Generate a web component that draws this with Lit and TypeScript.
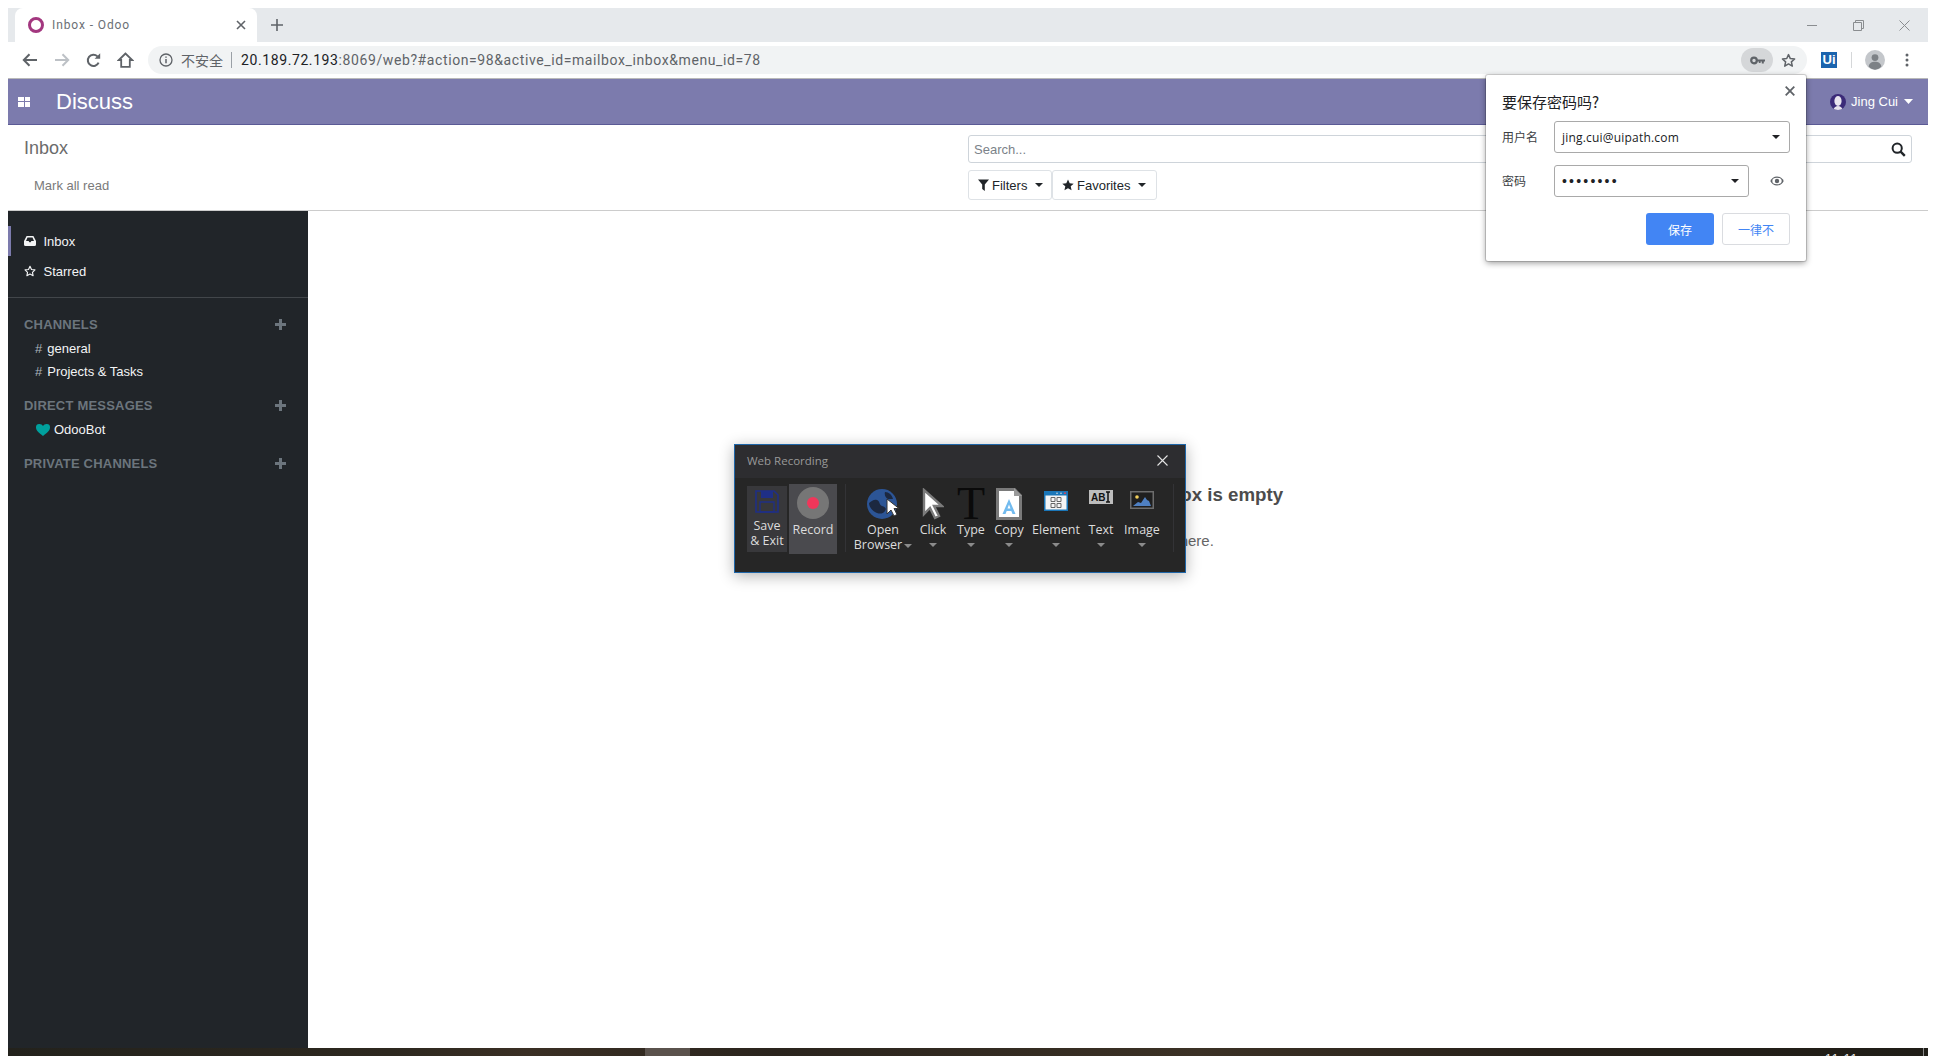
import { LitElement, html, css } from "lit";
import { customElement } from "lit/decorators.js";

const CJK = css`"Noto Sans CJK SC"`;

const caret = html`<svg class="tcaret" width="8" height="4" viewBox="0 0 8 4"><path d="M0 0h8L4 4z" fill="#8b8b8b"/></svg>`;

@customElement("app-root")
export class AppRoot extends LitElement {
  static styles = css`
    :host { display: block; width: 1936px; height: 1056px; overflow: hidden; background: #fff; position: relative; font-family: "Liberation Sans", ${CJK}, sans-serif; }
    * { box-sizing: border-box; }
    svg { display: block; flex: none; }
    .win { margin-left: 8px; width: 1920px; height: 1056px; padding-top: 8px; display: flex; flex-direction: column; }

    .tabstrip { height: 34px; background: #e6e9ec; display: flex; align-items: stretch; flex: none; padding-left: 7px; }
    .tab { width: 242px; background: #fff; border-radius: 8px 8px 0 0; display: flex; align-items: center; padding-left: 13px; padding-right: 11px; }
    .tab .fav { width: 16px; height: 16px; border: 3px solid #a3377f; border-radius: 50%; }
    .tab .ttl { font: 12px "Roboto", sans-serif; letter-spacing: .9px; color: #6b7075; margin-left: 8px; flex: 1; }
    .newtab { margin-left: 14px; align-self: center; }
    .strip-fill { flex: 1; }
    .winbtns { display: flex; align-items: center; gap: 35px; padding-right: 18px; }

    .toolbar { height: 36px; flex: none; display: flex; align-items: center; background: #fff; }
    .navs { display: flex; align-items: center; width: 140px; padding-left: 14px; }
    .navs .nb { width: 32px; display: flex; justify-content: flex-start; }
    .navs .nb.rl { padding-left: 1px; }
    .omni { width: 1659px; height: 28px; background: #f1f3f4; border-radius: 14px; display: flex; align-items: center; padding-left: 11px; padding-right: 11px; flex: none; }
    .sec { font: 14px ${CJK}, sans-serif; color: #5f6368; margin-left: 8px; width: 42px; white-space: nowrap; }
    .omni .bar { width: 1px; height: 16px; background: #9aa0a6; margin: 0 9px 0 8px; }
    .url { font: 14px "Roboto", sans-serif; letter-spacing: .6px; color: #5f6368; flex: 1; white-space: nowrap; }
    .url b { font-weight: 400; color: #202124; }
    .keychip { width: 32px; height: 24px; background: #d5d7d9; border-radius: 12px; display: flex; align-items: center; justify-content: center; margin-right: 8px; }
    .tright { display: flex; align-items: center; }
    .ui { width: 16px; height: 16px; background: #1b64ae; color: #fff; font: 700 13px/16px "Liberation Sans", sans-serif; text-align: center; margin-left: 14px; }
    .tsep { width: 1px; height: 16px; background: #d5d7d9; margin-left: 14px; }
    .avatar { width: 20px; height: 20px; border-radius: 50%; background: #c4c7cb; margin-left: 13px; overflow: hidden; }
    .dots { margin-left: 20px; }

    .nav { height: 47px; flex: none; background: #7c7bad; border-top: 1px solid #b9b9b9; border-bottom: 1px solid #5b5a95; display: flex; align-items: center; color: #fff; padding-left: 10px; }
    .grid { width: 12px; height: 10px; display: grid; grid-template-columns: 1fr 1fr; grid-template-rows: 1fr 1fr; gap: 1px; }
    .grid i { background: #fff; display: block; }
    .nav h1 { font: 400 22px/1 "Liberation Sans", sans-serif; margin: 0 0 0 26px; flex: 1; }
    .user { display: flex; align-items: center; font-size: 13px; padding-right: 15px; }
    .user .pic { width: 16px; height: 16px; border-radius: 50%; background: #3b2a78; margin-right: 5px; overflow: hidden; }
    .user .cr { margin-left: 6px; }

    .cp { height: 86px; flex: none; border-bottom: 1px solid #ccc; display: flex; background: #fff; }
    .cp-left { width: 960px; padding-left: 16px; }
    .cp-left .bc { font-size: 18px; color: #6b6b6b; margin-top: 13px; line-height: 21px; }
    .cp-left .mark { font-size: 13px; color: #7a7a7a; margin: 19px 0 0 10px; line-height: 16px; }
    .cp-right { flex: 1; padding-top: 10px; padding-right: 16px; }
    .search { height: 28px; border: 1px solid #ced4da; border-radius: 3px; display: flex; align-items: center; justify-content: space-between; padding: 1px 5px 0 5px; font-size: 13px; color: #7b8289; }
    .btns { display: flex; margin-top: 7px; }
    .fbtn { height: 30px; border: 1px solid #dee2e6; border-radius: 3px; display: flex; align-items: center; font-size: 13px; color: #212529; padding-left: 9px; }
    .fbtn.a { width: 84px; }
    .fbtn.b { width: 105px; }
    .fbtn span { margin-left: 3px; }
    .fbtn .cr { margin-left: 8px; }

    .body { flex: 1; display: flex; min-height: 0; }
    .side { width: 300px; flex: none; background: #212529; color: #fff; padding-top: 15px; font-size: 13px; }
    .row { height: 30px; display: flex; align-items: center; padding-left: 16px; }
    .row.on { box-shadow: inset 3px 0 0 #7c7bad; }
    .row .lbl { margin-left: 7.5px; color: #f3f4f5; }
    .div { height: 1px; background: #42464a; margin-top: 11px; }
    .sec-h { height: 20px; display: flex; align-items: center; justify-content: space-between; padding: 0 22px 0 16px; font-weight: 700; font-size: 13px; color: #6c757d; margin-top: 12px; letter-spacing: .2px; }
    .sec-h.first { margin-top: 16px; }
    .item { height: 23px; display: flex; align-items: center; padding-left: 28px; color: #f3f4f5; }
    .item .h { color: #adb5bd; margin-right: 5px; margin-left: -1px; }
    .item .heart { margin-right: 4px; }
    .items { margin-top: 3px; }
    .main { flex: 1; padding-top: 273px; text-align: center; background: #fff; }
    .main h4 { font-size: 18.7px; font-weight: 700; color: #4c4c4c; margin: 0; line-height: 22px; }
    .main p { font-size: 15px; color: #666; margin: 24px 0 0; line-height: 22px; }

    .task { height: 8px; flex: none; background: linear-gradient(90deg, #23221c 0%, #2d281f 20%, #3a2f24 27%, #2a241d 40%, #3b3125 62%, #262019 80%, #1f1d17 100%); display: flex; position: relative; overflow: hidden; }
    .task .lit { width: 45px; margin-left: 637px; background: #5a524c; }
    .task .clock { margin-left: 1135px; font: 12px/12px "Liberation Sans", sans-serif; color: #eee; letter-spacing: 1px; margin-top: 5px; }
    .task .edge { position: absolute; right: 4px; top: 0; width: 1px; height: 8px; background: #8a8a8a; }

    .bubble { position: absolute; left: 1486px; top: 75px; width: 320px; height: 186px; background: #fff; border-radius: 2px; box-shadow: 0 0 0 1px rgba(0,0,0,.15), 0 2px 6px rgba(0,0,0,.4); padding: 0 16px; color: #3c4043; }
    .bubble .close { position: absolute; right: 11px; top: 11px; }
    .bubble .t { font: 15px/20px ${CJK}, sans-serif; color: #202124; padding-top: 17px; height: 46px; }
    .brow { display: flex; align-items: center; height: 32px; margin-bottom: 12px; font: 12px ${CJK}, sans-serif; }
    .brow label { width: 52px; flex: none; padding-bottom: 2px; }
    .sel { height: 32px; border: 1px solid #a9a9a9; border-radius: 3px; display: flex; align-items: center; justify-content: space-between; padding: 0 9px 0 7px; font: 12px "Open Sans", sans-serif; letter-spacing: .2px; color: #202124; }
    .sel.u { width: 236px; }
    .sel.p { width: 195px; font: 14px "Liberation Sans", sans-serif; letter-spacing: 2.2px; }
    .eye { margin-left: 21px; }
    .bact { display: flex; justify-content: flex-end; gap: 8px; margin-top: 16px; }
    .bb { width: 68px; height: 32px; border-radius: 3px; display: flex; align-items: center; justify-content: center; font: 12px ${CJK}, sans-serif; }
    .bb.s { background: #4285f4; color: #fff; }
    .bb.n { border: 1px solid #dadce0; color: #4285f4; }

    .rec { position: absolute; left: 734px; top: 444px; width: 452px; height: 129px; background: #262626; border: 1px solid #1f66a8; box-shadow: 0 3px 14px rgba(0,0,0,.3); font-family: "Open Sans", sans-serif; color: #d8d8d8; }
    .rec .hd { height: 33px; background: #2d2d30; display: flex; align-items: center; justify-content: space-between; padding: 0 17px 2px 12px; font-size: 11.5px; color: #999; }
    .tools { display: flex; height: 95px; padding-left: 12px; }
    .save { width: 40px; height: 66px; background: #38383b; margin-top: 8px; display: flex; flex-direction: column; align-items: center; font-size: 12.5px; line-height: 15px; text-align: center; padding-top: 4px; color: #dcdcdc; flex: none; white-space: nowrap; }
    .save svg { margin-bottom: 5px; }
    .record { width: 48px; height: 70px; background: #4a4a4e; margin: 6px 0 0 2px; display: flex; flex-direction: column; align-items: center; padding-top: 3px; font-size: 12.5px; line-height: 15px; color: #dcdcdc; flex: none; }
    .circle { width: 32px; height: 32px; border-radius: 50%; background: #767676; display: flex; align-items: center; justify-content: center; margin-bottom: 3px; }
    .circle i { width: 12px; height: 12px; border-radius: 50%; background: #f0365a; display: block; }
    .vs { width: 1px; height: 68px; background: #333336; margin-top: 6px; flex: none; }
    .vs.v1 { margin-left: 8px; }
    .vs.v2 { margin-left: 10px; }
    .tool { display: flex; flex-direction: column; align-items: center; font-size: 12.5px; line-height: 15px; color: #dcdcdc; text-align: center; flex: none; margin-top: 8px; }
    .w-open { width: 60px; margin-left: 7px; }
    .w-click { width: 36px; margin-left: 2px; }
    .w-type { width: 36px; margin-left: 2px; }
    .w-copy { width: 36px; margin-left: 2px; }
    .w-el { width: 52px; margin-left: 3px; }
    .w-text { width: 34px; margin-left: 2px; }
    .w-img { width: 42px; margin-left: 3px; }
    .ico { height: 36px; display: flex; align-items: center; justify-content: center; }
    .up7 { margin-bottom: 7px; }
    .up9 { margin-bottom: 9px; }
    .up14 { margin-bottom: 14px; }
    .tool .tl { white-space: nowrap; }
    .tcaret { margin: 6px auto 0; }
    .bigt { font: 46px/36px "Liberation Serif", serif; color: #0a0a0a; height: 36px; }
    .brow2 { display: flex; align-items: center; gap: 2px; white-space: nowrap; }
    .brow2 .tcaret { margin: 2px 0 0; }
  `;

  render() {
    return html`
      <div class="win">
        <div class="tabstrip">
          <div class="tab">
            <div class="fav"></div>
            <div class="ttl">Inbox - Odoo</div>
            <svg width="10" height="10" viewBox="0 0 10 10"><path d="M1 1l8 8M9 1l-8 8" stroke="#5f6368" stroke-width="1.6"/></svg>
          </div>
          <svg class="newtab" width="12" height="12" viewBox="0 0 12 12"><path d="M6 0v12M0 6h12" stroke="#5f6368" stroke-width="1.6"/></svg>
          <div class="strip-fill"></div>
          <div class="winbtns">
            <svg width="11" height="11" viewBox="0 0 11 11"><path d="M0 5.5h10" stroke="#8a8d90"/></svg>
            <svg width="11" height="11" viewBox="0 0 11 11"><path d="M.5 2.5h8v8h-8zM2.5 2.5v-2h8v8h-2" fill="none" stroke="#8a8d90"/></svg>
            <svg width="11" height="11" viewBox="0 0 11 11"><path d="M.5.5l10 10M10.5.5l-10 10" stroke="#8a8d90"/></svg>
          </div>
        </div>
        <div class="toolbar">
          <div class="navs">
            <div class="nb"><svg width="16" height="14" viewBox="0 0 16 14"><path d="M15 7H2M7.500 1.200L1.800 7l5.700 5.800" fill="none" stroke="#5f6368" stroke-width="2"/></svg></div>
            <div class="nb"><svg width="16" height="14" viewBox="0 0 16 14"><path d="M1 7h13M8.500 1.200L14.200 7l-5.700 5.800" fill="none" stroke="#bdc1c6" stroke-width="2"/></svg></div>
            <div class="nb rl"><svg width="15" height="15" viewBox="0 0 15 15"><path d="M12.600 9.600A5.600 5.600 0 1 1 11.400 3.400" fill="none" stroke="#5f6368" stroke-width="2"/><path d="M8.600 5.800h5.600V.2z" fill="#5f6368"/></svg></div>
            <div class="nb"><svg width="17" height="16" viewBox="0 0 17 16"><path d="M8.500 1.500L1.800 8h2.400v6.800h8.600V8h2.400z" fill="none" stroke="#5f6368" stroke-width="1.800"/></svg></div>
          </div>
          <div class="omni">
            <svg width="14" height="14" viewBox="0 0 14 14"><circle cx="7" cy="7" r="6" fill="none" stroke="#5f6368" stroke-width="1.300"/><path d="M7 6v4.200M7 3.400v1.400" stroke="#5f6368" stroke-width="1.500"/></svg>
            <span class="sec">不安全</span>
            <span class="bar"></span>
            <span class="url"><b>20.189.72.193</b>:8069/web?#action=98&active_id=mailbox_inbox&menu_id=78</span>
            <div class="keychip"><svg width="15" height="9" viewBox="0 0 15 9"><circle cx="4" cy="4.500" r="2.800" fill="none" stroke="#5f6368" stroke-width="2.200"/><path d="M6.500 3.400H15v2.200h-1.200v2h-2v-2h-1.200v1.400H8.800V5.600H6.500z" fill="#5f6368"/></svg></div>
            <svg width="15" height="15" viewBox="0 0 24 24"><path d="M12 2.600l2.900 6.300 6.900.7-5.200 4.600 1.500 6.800-6.100-3.500-6 3.500 1.400-6.800-5.100-4.600 6.900-.7z" fill="none" stroke="#5f6368" stroke-width="2.400" stroke-linejoin="round"/></svg>
          </div>
          <div class="tright">
            <div class="ui">Ui</div>
            <div class="tsep"></div>
            <div class="avatar"><svg width="20" height="20" viewBox="0 0 20 20"><circle cx="10" cy="7.600" r="3.400" fill="#7d8186"/><path d="M3.600 16.500c.6-3.600 3.400-4.800 6.400-4.800s5.800 1.200 6.400 4.800c-1.600 2-4 3.200-6.400 3.200s-4.800-1.200-6.400-3.200z" fill="#7d8186"/></svg></div>
            <svg class="dots" width="4" height="14" viewBox="0 0 4 14"><circle cx="2" cy="2" r="1.500" fill="#5f6368"/><circle cx="2" cy="7" r="1.500" fill="#5f6368"/><circle cx="2" cy="12" r="1.500" fill="#5f6368"/></svg>
          </div>
        </div>
        <div class="nav">
          <div class="grid"><i></i><i></i><i></i><i></i></div>
          <h1>Discuss</h1>
          <div class="user">
            <div class="pic"><svg width="16" height="16" viewBox="0 0 16 16"><ellipse cx="8" cy="7" rx="3.600" ry="5" fill="#e8e4ee"/><path d="M3.500 16c.5-3 2.500-4 4.500-4s4 1 4.500 4z" fill="#e8e4ee"/></svg></div>
            Jing Cui
            <svg class="cr" width="9" height="5" viewBox="0 0 9 5"><path d="M0 0h9L4.500 5z" fill="#fff"/></svg>
          </div>
        </div>
        <div class="cp">
          <div class="cp-left">
            <div class="bc">Inbox</div>
            <div class="mark">Mark all read</div>
          </div>
          <div class="cp-right">
            <div class="search"><span>Search...</span>
              <svg width="15" height="15" viewBox="0 0 15 15"><circle cx="6.200" cy="6.200" r="4.600" fill="none" stroke="#212529" stroke-width="2"/><path d="M9.600 9.600l4.200 4.200" stroke="#212529" stroke-width="2.400"/></svg>
            </div>
            <div class="btns">
              <div class="fbtn a">
                <svg width="11" height="12" viewBox="0 0 11 12"><path d="M0 .5h11L6.800 5.600V12L4.200 10V5.600z" fill="#212529"/></svg>
                <span>Filters</span>
                <svg class="cr" width="8" height="4" viewBox="0 0 8 4"><path d="M0 0h8L4 4z" fill="#212529"/></svg>
              </div>
              <div class="fbtn b">
                <svg width="12" height="12" viewBox="0 0 24 24"><path d="M12 1l3.400 7.400 8 .9-6 5.400 1.700 8L12 18.700l-7.100 4 1.700-8-6-5.400 8-.9z" fill="#212529"/></svg>
                <span>Favorites</span>
                <svg class="cr" width="8" height="4" viewBox="0 0 8 4"><path d="M0 0h8L4 4z" fill="#212529"/></svg>
              </div>
            </div>
          </div>
        </div>
        <div class="body">
          <div class="side">
            <div class="row on">
              <svg width="12" height="10" viewBox="0 0 12 10"><path d="M2.600 0h6.800L12 5v3.500A1.500 1.500 0 0 1 10.500 10h-9A1.500 1.500 0 0 1 0 8.500V5zM3.500 1.600L2 5h2.600l.8 1.300h1.200L7.400 5H10L8.500 1.600z" fill="#f3f4f5" fill-rule="evenodd"/></svg>
              <span class="lbl">Inbox</span>
            </div>
            <div class="row">
              <svg width="12" height="12" viewBox="0 0 24 24"><path d="M12 2.600l3 6.300 6.900.9-5 4.800 1.300 6.800-6.200-3.300-6.200 3.300 1.300-6.800-5-4.800 6.900-.9z" fill="none" stroke="#f3f4f5" stroke-width="2.300" stroke-linejoin="round"/></svg>
              <span class="lbl">Starred</span>
            </div>
            <div class="div"></div>
            <div class="sec-h first"><span>CHANNELS</span>${this.plus()}</div>
            <div class="items">
              <div class="item"><span class="h">#</span>general</div>
              <div class="item"><span class="h">#</span>Projects &amp; Tasks</div>
            </div>
            <div class="sec-h"><span>DIRECT MESSAGES</span>${this.plus()}</div>
            <div class="items">
              <div class="item">
                <svg class="heart" width="14" height="12" viewBox="0 0 14 12"><path d="M7 12C3 8.700 0 6.500 0 3.500A3.400 3.400 0 0 1 3.500 0C5 0 6.300.8 7 2c.7-1.200 2-2 3.500-2A3.400 3.400 0 0 1 14 3.500C14 6.500 11 8.700 7 12z" fill="#00a09d"/></svg>
                OdooBot
              </div>
            </div>
            <div class="sec-h"><span>PRIVATE CHANNELS</span>${this.plus()}</div>
          </div>
          <div class="main">
            <h4>Congratulations, your inbox is empty</h4>
            <p>New messages appear here.</p>
          </div>
        </div>
        <div class="task">
          <div class="lit"></div>
          <div class="clock">11:11</div>
          <div class="edge"></div>
        </div>
      </div>

      <div class="bubble">
        <svg class="close" width="10" height="10" viewBox="0 0 10 10"><path d="M.7.7l8.600 8.600M9.300.7L.7 9.300" stroke="#5f6368" stroke-width="1.800"/></svg>
        <div class="t">要保存密码吗?</div>
        <div class="brow"><label>用户名</label>
          <div class="sel u">jing.cui@uipath.com<svg width="8" height="4" viewBox="0 0 8 4"><path d="M0 0h8L4 4z" fill="#202124"/></svg></div>
        </div>
        <div class="brow"><label>密码</label>
          <div class="sel p">••••••••<svg width="8" height="4" viewBox="0 0 8 4"><path d="M0 0h8L4 4z" fill="#202124"/></svg></div>
          <svg class="eye" width="14" height="10" viewBox="0 0 14 10"><path d="M7 .5C4 .5 1.500 2.300.3 5 1.500 7.700 4 9.500 7 9.500s5.500-1.800 6.700-4.500C12.500 2.300 10 .5 7 .5z" fill="#5f6368"/><ellipse cx="7" cy="5" rx="4.700" ry="3.200" fill="#fff"/><circle cx="7" cy="5" r="2.200" fill="#5f6368"/></svg>
        </div>
        <div class="bact"><div class="bb s">保存</div><div class="bb n">一律不</div></div>
      </div>

      <div class="rec">
        <div class="hd"><span>Web Recording</span>
          <svg width="11" height="11" viewBox="0 0 11 11"><path d="M.5.5l10 10M10.500.5l-10 10" stroke="#e4e4e4" stroke-width="1.100"/></svg>
        </div>
        <div class="tools">
          <div class="save">
            <svg width="24" height="23" viewBox="0 0 24 23"><path d="M1 1h18l4 4v17H1z" fill="none" stroke="#1f2f86" stroke-width="1.600"/><path d="M6 1h12v7H6z" fill="#1f2f86"/><path d="M5 12h14v10H5z" fill="none" stroke="#1f2f86" stroke-width="1.300"/></svg>
            <span>Save<br />&amp; Exit</span>
          </div>
          <div class="record"><div class="circle"><i></i></div>Record</div>
          <div class="vs v1"></div>
          <div class="tool w-open">
            <div class="ico">${this.globe()}</div>
            <div class="tl">Open</div>
            <div class="brow2">Browser${caret}</div>
          </div>
          <div class="tool w-click">
            <div class="ico"><svg width="22" height="32" viewBox="0 0 22 32"><path d="M2 2v24l6-6 5 10 4-2-5-10h8z" fill="#fff" stroke="#7b7b7b" stroke-width="2.400"/></svg></div>
            <div class="tl">Click</div>${caret}
          </div>
          <div class="tool w-type">
            <div class="bigt">T</div>
            <div class="tl">Type</div>${caret}
          </div>
          <div class="tool w-copy">
            <div class="ico">${this.doc()}</div>
            <div class="tl">Copy</div>${caret}
          </div>
          <div class="tool w-el">
            <div class="ico"><svg class="up7" width="24" height="20" viewBox="0 0 24 20"><path d="M0 0h24v20H0z" fill="#1a76b8"/><path d="M1.500 4.500h21v14h-21z" fill="#f4f4f4"/><circle cx="13" cy="2.200" r=".8" fill="#ddd"/><circle cx="17" cy="2.200" r=".8" fill="#ddd"/><circle cx="21" cy="2.200" r=".9" fill="#f04050"/><path d="M7 6.500h4v4H7zM13 6.500h4v4h-4zM7 12.500h4v4H7zM13 12.500h4v4h-4z" fill="none" stroke="#666" stroke-width="1"/></svg></div>
            <div class="tl">Element</div>${caret}
          </div>
          <div class="tool w-text">
            <div class="ico"><svg class="up14" width="24" height="14" viewBox="0 0 24 14"><rect width="24" height="14" fill="#bdbdbd"/><text x="2" y="11" font-family="Liberation Sans" font-weight="700" font-size="10" fill="#111">AB</text><path d="M17 2h4M19 2v10M17 12h4" stroke="#111" stroke-width="1.500"/></svg></div>
            <div class="tl">Text</div>${caret}
          </div>
          <div class="tool w-img">
            <div class="ico"><svg class="up9" width="24" height="18" viewBox="0 0 24 18"><rect x=".75" y=".75" width="22.500" height="16.500" fill="#1f1f1f" stroke="#6d6d6d" stroke-width="1.500"/><circle cx="7" cy="6" r="1.800" fill="#f2cf5b"/><path d="M3 15l5-4 3 1 4-6 2 3 2 1 2 5z" fill="#4f80c2"/></svg></div>
            <div class="tl">Image</div>${caret}
          </div>
          <div class="vs v2"></div>
        </div>
      </div>
    `;
  }

  plus() {
    return html`<svg width="11" height="11" viewBox="0 0 11 11"><path d="M5.500 0v11M0 5.500h11" stroke="#6c757d" stroke-width="3"/></svg>`;
  }

  globe() {
    return html`<svg width="34" height="32" viewBox="0 0 34 32">
      <circle cx="16" cy="16" r="15" fill="#2c5596"/>
      <path d="M3 15c3-2 5-4 8-3s2 5 5 6 5 2 3 5-5 3-8 2-8-5-8-10zM19 4c4 0 7 3 8 7l-5 0c-2-1-4-4-3-7z" fill="#1c2840"/>
      <path d="M21 11v15l4-4 3 6 3-1.500-3-6h5z" fill="#fff" stroke="#333" stroke-width="1"/>
    </svg>`;
  }

  doc() {
    return html`<svg width="26" height="32" viewBox="0 0 26 32">
      <path d="M1.500 1.500h17l6 6v23h-23z" fill="#fff" stroke="#7a7a7a" stroke-width="3"/>
      <path d="M18 0l8 8h-8z" fill="#9a9a9a"/>
      <path d="M13 11l-6.500 15h3l1.200-3h4.600l1.200 3h3zM11.500 20.500L13 16.500l1.500 4z" fill="#72bbef" fill-rule="evenodd"/>
    </svg>`;
  }
}
